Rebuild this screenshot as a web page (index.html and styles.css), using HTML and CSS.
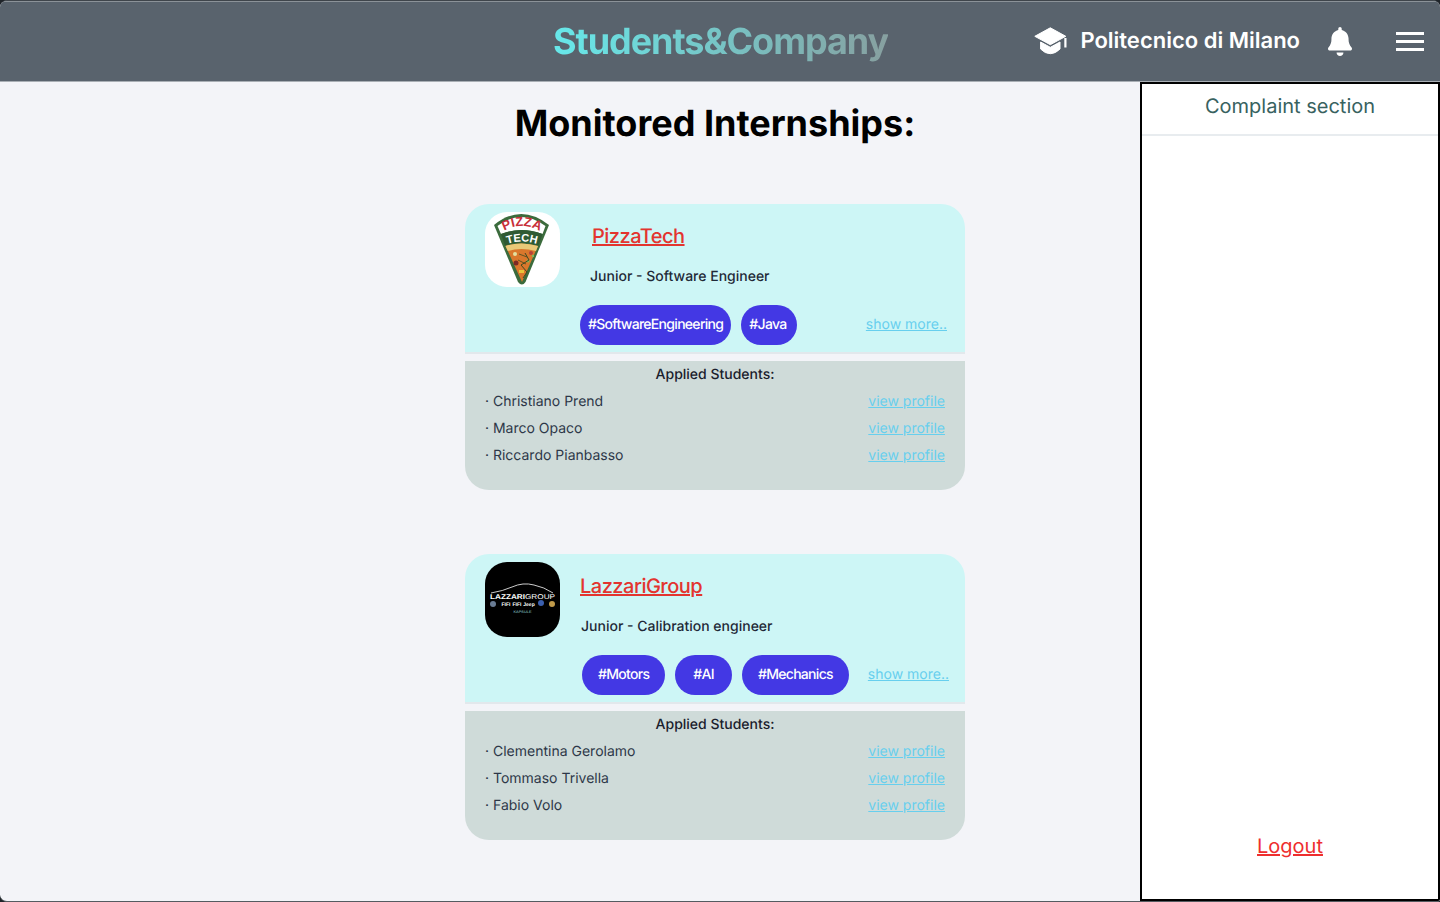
FILE: index.html
```html
<!DOCTYPE html>
<html lang="en">
<head>
    <meta charset="UTF-8">
    <meta name="viewport" content="width=device-width, initial-scale=1.0">
    <title>Students&amp;Company</title>
    <link rel="stylesheet" href="styles.css">
</head>
<body>
    <header class="topbar">
        <div class="brand">Students&amp;Company</div>
        <div class="topbar-right">
            <svg class="uni-icon" viewBox="0 0 33 28" width="33" height="28">
                <path fill="#fff" stroke="#fff" stroke-width="1" stroke-linejoin="round" d="M16.300 .8 L.8 9.300 L16.300 17.700 L31.800 9.300 Z"/>
                <path fill="#fff" stroke="#fff" stroke-width="1" stroke-linejoin="round" d="M6.600 15 V22 Q11 26.700 16.300 26.700 Q21.600 26.700 26 22 V15 L16.300 20.300 Z"/>
                <path fill="#fff" d="M30.300 11 h2.200 v9.500 h-2.200 z"/>
            </svg>
            <span class="uni-name">Politecnico di Milano</span>
            <svg class="bell-icon" viewBox="0 0 448 512" width="24" height="29" preserveAspectRatio="none">
                <path fill="#fff" d="M224 0c-17.700 0-32 14.300-32 32v19.200C119 66 64 130.600 64 208v18.800c0 47-17.300 92.400-48.500 127.600l-7.400 8.300c-8.400 9.400-10.400 22.900-5.300 34.400S19.400 416 32 416h384c12.600 0 24-7.400 29.200-18.900s3.100-25-5.300-34.400l-7.400-8.300c-31.200-35.200-48.500-80.500-48.500-127.600V208c0-77.400-55-142-128-156.800V32c0-17.700-14.300-32-32-32zm45.300 493.300c12-12 18.700-28.300 18.700-45.300H160c0 17 6.700 33.300 18.700 45.300s28.300 18.700 45.300 18.700 33.300-6.700 45.300-18.700z"/>
            </svg>
            <div class="burger">
                <span></span>
                <span></span>
                <span></span>
            </div>
        </div>
    </header>

    <div class="page">
        <main class="content">
            <h1 class="page-title">Monitored Internships:</h1>

            <section class="card">
                <div class="card-top">
                    <div class="card-head">
                        <div class="logo logo-white">
                            <svg viewBox="0 0 75 75" width="75" height="75">
                                <defs>
                                    <path id="pizzaArc" d="M14 22 Q36 6 60 22"/>
                                    <path id="techArc" d="M19 33 Q36 26 55 33"/>
                                </defs>
                                <path d="M9 13 Q36 -9 64 13 L40.500 70 Q37 75 33 70 Z" fill="#3b6b3c"/>
                                <path d="M12.500 14 Q36 -4 60.500 14 L57.500 22 Q36 14 16 22 Z" fill="#fff"/>
                                <text class="pizza-word"><textPath href="#pizzaArc" startOffset="50%">PIZZA</textPath></text>
                                <path d="M16 22 Q36 14 57.500 22 L53.500 33.500 Q36 28 20 33.500 Z" fill="#2f5a33"/>
                                <text class="tech-word"><textPath href="#techArc" startOffset="50%">TECH</textPath></text>
                                <path d="M20.500 34 Q36 29 53 34 L37 70 Z" fill="#d9772c"/>
                                <path d="M20.500 34 Q36 29 53 34 L51 39 Q36 35 22.800 39 Z" fill="#e9c978"/>
                                <circle cx="46" cy="41" r="2" fill="#b5423a"/>
                                <circle cx="30" cy="42" r="2" fill="#e4e0a0"/>
                                <circle cx="31" cy="51" r="2.500" fill="#7c2a24"/>
                                <circle cx="43" cy="49" r="1.500" fill="#7dbb5c"/>
                                <circle cx="48" cy="44" r="1.200" fill="#7dbb5c"/>
                                <path d="M34 58h5v3h-5z" fill="#e9c53a"/>
                                <path d="M40 41 L44 48 L36 53 L42 60 L38 66" stroke="#3d4a22" fill="none"/>
                                <path d="M34 42 L42 45 M33 48 L41 52" stroke="#3d4a22" stroke-width="0.800" fill="none"/>
                            </svg>
                        </div>
                        <div class="card-info">
                            <a class="company company-pizza" href="#">PizzaTech</a>
                            <div class="role role-pizza">Junior - Software Engineer</div>
                        </div>
                    </div>
                    <div class="tags tags-pizza">
                        <span class="tag tag-tight">#SoftwareEngineering</span>
                        <span class="tag tag-java">#Java</span>
                        <a class="more" href="#">show more..</a>
                    </div>
                </div>
                <div class="students">
                    <div class="students-title">Applied Students:</div>
                    <div class="student"><span>· Christiano Prend</span><a href="#">view profile</a></div>
                    <div class="student"><span>· Marco Opaco</span><a href="#">view profile</a></div>
                    <div class="student"><span>· Riccardo Pianbasso</span><a href="#">view profile</a></div>
                </div>
            </section>

            <section class="card">
                <div class="card-top">
                    <div class="card-head">
                        <div class="logo logo-black">
                            <svg viewBox="0 0 75 75" width="75" height="75">
                                <path d="M6 31 Q18 29 27 25 Q38 20 49 23 Q59 25 68 31" stroke="#fff" stroke-width="0.800" fill="none"/>
                                <text x="37.500" y="36.500" class="lazzari-word" textLength="65" lengthAdjust="spacingAndGlyphs"><tspan class="lazzari-bold">LAZZARI</tspan>GROUP</text>
                                <circle cx="8" cy="42" r="3" fill="#6a7c94"/>
                                <text x="21" y="44" class="lazzari-small">FIFI</text>
                                <text x="32" y="44" class="lazzari-small">FIFI</text>
                                <text x="44" y="44" class="lazzari-small">Jeep</text>
                                <circle cx="56" cy="41" r="3" fill="#3b5fae"/>
                                <circle cx="67" cy="42" r="3" fill="#c09a4a"/>
                                <text x="37.500" y="51" class="lazzari-tiny" textLength="18" lengthAdjust="spacingAndGlyphs">KAPSULE</text>
                            </svg>
                        </div>
                        <div class="card-info">
                            <a class="company company-lazzari" href="#">LazzariGroup</a>
                            <div class="role role-lazzari">Junior - Calibration engineer</div>
                        </div>
                    </div>
                    <div class="tags tags-lazzari">
                        <span class="tag">#Motors</span>
                        <span class="tag tag-ai">#AI</span>
                        <span class="tag">#Mechanics</span>
                        <a class="more" href="#">show more..</a>
                    </div>
                </div>
                <div class="students">
                    <div class="students-title">Applied Students:</div>
                    <div class="student"><span>· Clementina Gerolamo</span><a href="#">view profile</a></div>
                    <div class="student"><span>· Tommaso Trivella</span><a href="#">view profile</a></div>
                    <div class="student"><span>· Fabio Volo</span><a href="#">view profile</a></div>
                </div>
            </section>
        </main>

        <aside class="side">
            <div class="side-title">Complaint section</div>
            <div class="side-body"></div>
            <a class="logout" href="#">Logout</a>
        </aside>
    </div>
</body>
</html>
```

FILE: styles.css
```css
* {
    box-sizing: border-box;
}
html {
    height: 100%;
    background-color: #1f2429;
}
body {
    margin: 0;
    height: 902px;
    overflow: hidden;
    background-color: #f3f4f8;
    font-family: Inter, sans-serif;
    text-rendering: geometricPrecision;
    display: flex;
    flex-direction: column;
    border-top: 1px solid #3f454b;
    border-bottom: 1px solid #555b60;
    border-radius: 7px 7px 3px 7px;
}

/* Top bar */
.topbar {
    position: relative;
    height: 81px;
    flex-shrink: 0;
    background-color: #59636d;
    border-top: 1px solid #8b9298;
    border-bottom: 1px solid #a9afb5;
    display: flex;
    justify-content: flex-end;
    align-items: center;
}
.brand {
    position: absolute;
    left: 553px;
    top: 17px;
    font-size: 36px;
    line-height: 44px;
    font-weight: 700;
    letter-spacing: -1.050px;
    background: linear-gradient(90deg, #67e8ea, #87a0a0);
    -webkit-background-clip: text;
    background-clip: text;
    color: transparent;
}
.topbar-right {
    display: flex;
    align-items: center;
    padding: 0 16px 1px 0;
}
.uni-icon {
    margin-right: 13px;
}
.uni-name {
    color: #fff;
    font-size: 22px;
    font-weight: 600;
    margin-right: 28px;
}
.bell-icon {
    margin-right: 44px;
}
.burger {
    width: 28px;
    display: flex;
    flex-direction: column;
    gap: 5px;
}
.burger span {
    height: 3px;
    background-color: #fff;
}

/* Layout */
.page {
    flex: 1;
    display: flex;
    min-height: 0;
}
.content {
    width: 1140px;
    padding-left: 290px;
    display: flex;
    flex-direction: column;
    align-items: center;
}
.page-title {
    margin: 19px 0 58px;
    font-size: 36px;
    line-height: 45px;
    font-weight: 700;
    color: #000;
}

/* Cards */
.card {
    width: 500px;
    margin-bottom: 64px;
}
.card-top {
    height: 150px;
    background-color: #cdf6f6;
    border-radius: 24px 24px 0 0;
    border-bottom: 2px solid #e2e8ec;
    padding: 8px 0 0 20px;
}
.card-head {
    display: flex;
    height: 93px;
}
.logo {
    width: 75px;
    height: 75px;
    border-radius: 22px;
    overflow: hidden;
    flex-shrink: 0;
}
.logo svg {
    display: block;
}
.logo-white {
    background-color: #fff;
}
.logo-black {
    background-color: #000;
}
.pizza-word {
    font-family: "Liberation Sans", sans-serif;
    font-weight: 700;
    font-size: 13px;
    fill: #c8303a;
    text-anchor: middle;
}
.tech-word {
    font-family: "Liberation Sans", sans-serif;
    font-weight: 700;
    font-size: 11px;
    fill: #fff;
    text-anchor: middle;
}
.lazzari-word {
    font-family: "Liberation Sans", sans-serif;
    font-size: 7px;
    fill: #fff;
    text-anchor: middle;
}
.lazzari-bold {
    font-weight: 700;
}
.lazzari-small {
    font-family: "Liberation Sans", sans-serif;
    font-size: 5px;
    font-weight: 700;
    fill: #fff;
    text-anchor: middle;
}
.lazzari-tiny {
    font-family: "Liberation Sans", sans-serif;
    font-size: 3.500px;
    fill: #8fd3d3;
    text-anchor: middle;
}
.card-info {
    display: flex;
    flex-direction: column;
}
.company {
    font-size: 20px;
    line-height: 24px;
    font-weight: 500;
    letter-spacing: -0.500px;
    color: #e3342f;
    margin-top: 12px;
    text-decoration-thickness: 2px;
}
.company-pizza {
    margin-left: 32px;
}
.company-lazzari {
    margin-left: 20px;
}
.role {
    font-size: 14px;
    line-height: 20px;
    font-weight: 500;
    color: #1f2937;
    margin-top: 19px;
}
.role-pizza {
    margin-left: 30px;
}
.role-lazzari {
    margin-left: 21px;
}
.tags {
    display: flex;
    align-items: center;
    gap: 10px;
}
.tags-pizza {
    margin-left: 95px;
}
.tags-lazzari {
    margin-left: 97px;
}
.tag {
    height: 40px;
    line-height: 40px;
    padding: 0 16px;
    border-radius: 20px;
    background-color: #4338e4;
    color: #fff;
    font-size: 14px;
    font-weight: 500;
    letter-spacing: -0.700px;
}
.tag-tight {
    padding: 0 8px;
}
.tag-java {
    padding: 0 11px 0 8px;
}
.tag-ai {
    padding: 0 18px;
}
.more {
    margin: 0 18px 2px auto;
    font-size: 14px;
    color: #67cfee;
}
.tags-lazzari .more {
    margin-right: 16px;
}
.students {
    margin-top: 7px;
    height: 129px;
    background-color: #cfdbd9;
    border-radius: 0 0 24px 24px;
    padding: 5px 20px 0;
}
.students-title {
    text-align: center;
    font-size: 14px;
    line-height: 18px;
    font-weight: 500;
    color: #1a202c;
    margin-bottom: 4px;
}
.student {
    display: flex;
    justify-content: space-between;
    font-size: 14px;
    line-height: 27px;
    color: #2d3748;
}
.student a {
    color: #67cfee;
}

/* Complaint side panel */
.side {
    width: 300px;
    border: 2px solid #000;
    background-color: #fff;
    display: flex;
    flex-direction: column;
    align-items: center;
}
.side-title {
    width: 100%;
    height: 52px;
    border-bottom: 2px solid #e8ecef;
    text-align: center;
    font-size: 20px;
    line-height: 44px;
    color: #38625f;
}
.side-body {
    flex: 1;
}
.logout {
    font-size: 20px;
    line-height: 24px;
    color: #ee2e2e;
    margin-bottom: 41px;
}
```
